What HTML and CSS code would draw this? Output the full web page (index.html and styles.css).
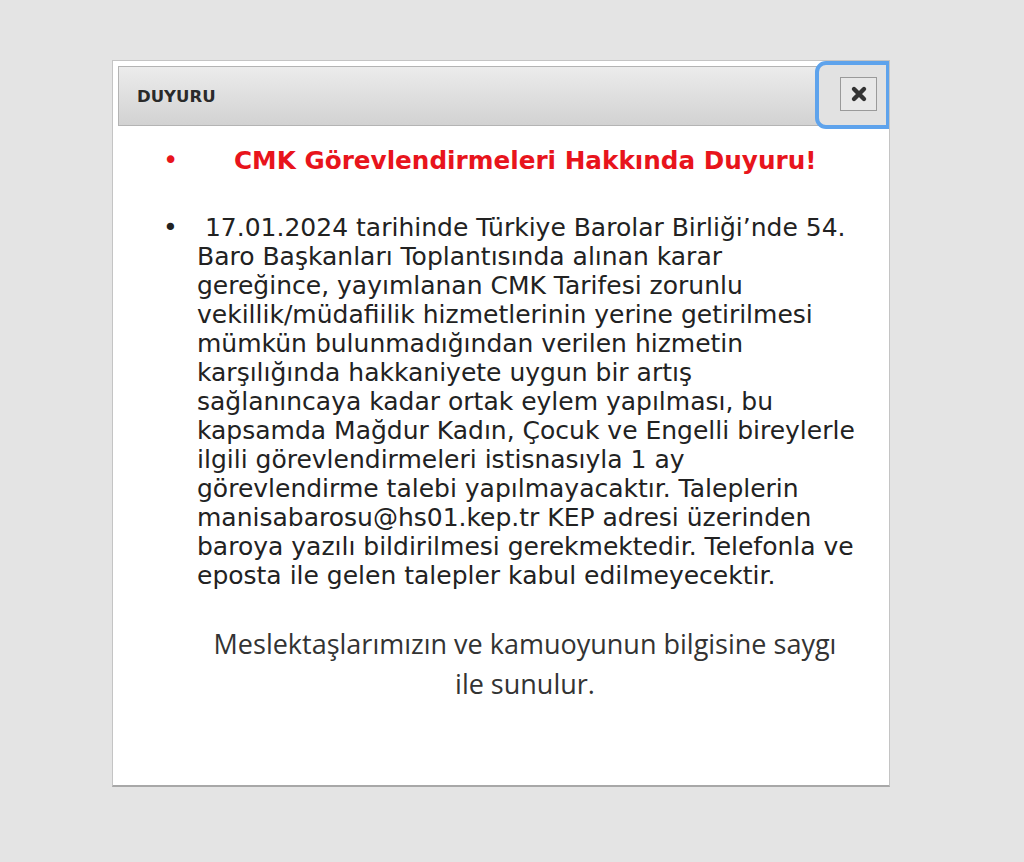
FILE: index.html
```html
<!DOCTYPE html>
<html lang="tr">
<head>
<meta charset="utf-8">
<link rel="stylesheet" href="styles.css">
</head>
<body>
<div class="page">
  <div class="dialog">
    <div class="header">
      <span class="title">DUYURU</span>
      <div class="focus-ring"></div>
      <button class="close" aria-label="Kapat">
        <svg width="20" height="18" viewBox="0 0 20 18"><path d="M5 4 L15 14 M15 4 L5 14" stroke="#333" stroke-width="4.4" stroke-linecap="round"/></svg>
      </button>
    </div>
    <div class="body">
      <ul class="list red">
        <li><span class="heading">CMK Görevlendirmeleri Hakkında Duyuru!</span></li>
      </ul>
      <ul class="list main">
        <li>&nbsp;17.01.2024 tarihinde Türkiye Barolar Birliği’nde 54.<br>Baro Başkanları Toplantısında alınan karar<br>gereğince, yayımlanan CMK Tarifesi zorunlu<br>vekillik/müdafiilik hizmetlerinin yerine getirilmesi<br>mümkün bulunmadığından verilen hizmetin<br>karşılığında hakkaniyete uygun bir artış<br>sağlanıncaya kadar ortak eylem yapılması, bu<br>kapsamda Mağdur Kadın, Çocuk ve Engelli bireylerle<br>ilgili görevlendirmeleri istisnasıyla 1 ay<br>görevlendirme talebi yapılmayacaktır. Taleplerin<br>manisabarosu@hs01.kep.tr KEP adresi üzerinden<br>baroya yazılı bildirilmesi gerekmektedir. Telefonla ve<br>eposta ile gelen talepler kabul edilmeyecektir.</li>
      </ul>
      <p class="closing">Meslektaşlarımızın ve kamuoyunun bilgisine saygı<br>ile sunulur.</p>
    </div>
  </div>
</div>
</body>
</html>
```
FILE: styles.css
```css
html, body {
  margin: 0;
  padding: 0;
  background: #e4e4e4;
}
.page {
  width: 1024px;
  height: 862px;
  padding: 60px 0 0 112px;
  box-sizing: border-box;
}
.dialog {
  width: 778px;
  height: 727px;
  box-sizing: border-box;
  background: #fff;
  border: 1px solid #c4c4c4;
  border-bottom: 2px solid #a8a8a8;
  padding: 5px 1px 0 5px;
  display: flex;
  flex-direction: column;
}
.header {
  position: relative;
  height: 60px;
  box-sizing: border-box;
  border: 1px solid #b4b4b4;
  background: linear-gradient(#ececec, #d2d2d2);
  display: flex;
  align-items: center;
  padding-left: 18px;
}
.title {
  font-family: "DejaVu Sans", Verdana, sans-serif;
  font-weight: bold;
  font-size: 16.5px;
  color: #2a2a2a;
  margin-top: 1px;
}
.focus-ring {
  position: absolute;
  left: 696px;
  top: -6px;
  width: 74px;
  height: 68px;
  box-sizing: border-box;
  border: 4px solid #5ea3ec;
  border-right-width: 3px;
  border-radius: 11px 0 0 11px;
  background: #e2e2e2;
}
.close {
  position: absolute;
  left: 721px;
  top: 10px;
  width: 37px;
  height: 34px;
  border: 1px solid #9a9a9a;
  background: #e8e8e8;
  padding: 0;
  display: flex;
  align-items: center;
  justify-content: center;
}
.body {
  flex: 1;
  background: #fff;
  margin-left: -5px;
  padding-top: 20px;
}
.list {
  margin: 0;
  padding: 0;
  list-style: none;
  font-family: "DejaVu Sans", Verdana, sans-serif;
}
.list li::before {
  content: "•";
  display: inline-block;
  width: 34px;
  margin-left: -34px;
  text-indent: 0;
}
.list.red {
  color: #e8141c;
  padding-left: 84px;
  font-size: 24.7px;
  line-height: 29px;
}
.list.red li {
  padding-left: 37px;
}
.list.red li::before {
  width: 71px;
  margin-left: -71px;
  font-size: 26px;
}
.heading {
  font-weight: bold;
}
.list.main {
  margin-top: 38px;
  padding-left: 84px;
  font-size: 25px;
  line-height: 29px;
  color: #222;
}
.closing {
  margin: 34px 0 0 0;
  width: 824px;
  text-align: center;
  font-family: "Open Sans", sans-serif;
  font-size: 27px;
  line-height: 40px;
  color: #333;
}
```
